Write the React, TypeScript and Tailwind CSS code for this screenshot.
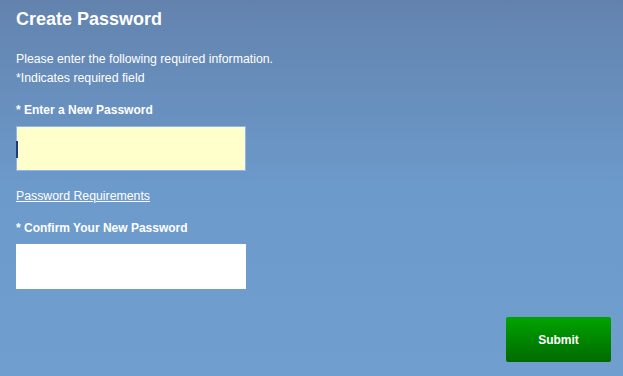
export default function App() {
  return (
    <div className="h-[376px] w-[623px] overflow-hidden bg-gradient-to-b from-[#6383ae] via-[#6c9acb] to-[#6f9ecf] font-['Liberation_Sans',Arial,sans-serif] text-white">
      <div className="flex h-full flex-col px-4 pt-[8px]">
        <h1 className="text-[18px] font-bold leading-[22px]">Create Password</h1>

        <p className="mt-[20px] text-[12.3px] leading-[19px]">Please enter the following required information.</p>
        <p className="text-[12.3px] leading-[19px]">*Indicates required field</p>

        <label className="mt-[14px] text-[12px] font-bold leading-[16px]">* Enter a New Password</label>
        <div className="relative mt-[8px] h-[45px] w-[230px] border border-[#8fb4ee] bg-[#ffffcc]">
          <span className="absolute left-[-1px] top-[14px] h-[17px] w-[2px] bg-[#1e3c78]" />
        </div>

        <a href="#" className="mt-[17px] w-fit text-[12.3px] leading-[16px] underline">
          Password Requirements
        </a>

        <label className="mt-[16px] text-[12px] font-bold leading-[16px]">* Confirm Your New Password</label>
        <div className="mt-[8px] h-[45px] w-[230px] bg-white" />

        <div className="mt-[28px] flex justify-end">
          <button className="mr-[-4px] h-[45px] w-[105px] rounded-[2px] bg-gradient-to-b from-[#00a400] to-[#006a00] text-[12px] font-bold text-white">
            Submit
          </button>
        </div>
      </div>
    </div>
  );
}
